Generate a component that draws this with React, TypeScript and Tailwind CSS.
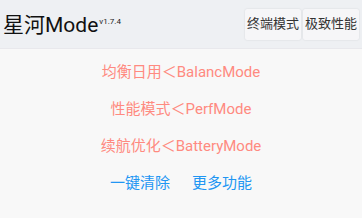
import React from 'react';

const modes = [
  { label: '均衡日用＜BalancMode' },
  { label: '性能模式＜PerfMode' },
  { label: '续航优化＜BatteryMode' },
];

const App: React.FC = () => {
  return (
    <div className="w-[362px] h-[218px] bg-[#f8f8f8] font-['Roboto','Noto_Sans_CJK_SC',sans-serif] overflow-hidden">
      <div className="h-[49px] bg-[#eef0f3] flex items-center justify-between pl-[3px] pr-[3px] border-b border-[#e8e8ec]">
        <div className="pt-[3px] leading-none whitespace-nowrap">
          <span className="text-[21px] text-[#111]">星河Mode</span>
          <span className="text-[8px] text-[#222] align-[8px] ml-[1px]">v1.7.4</span>
        </div>
        <div className="flex gap-[2px]">
          <button className="h-[31px] px-[2px] bg-[#f6f6f8] shadow-[0_0_2px_rgba(0,0,0,0.12)] rounded-[2px] text-[13px] text-[#333]">终端模式</button>
          <button className="h-[31px] px-[2px] bg-[#f6f6f8] shadow-[0_0_2px_rgba(0,0,0,0.12)] rounded-[2px] text-[13px] text-[#333]">极致性能</button>
        </div>
      </div>
      <div className="flex flex-col items-center pt-[5px]">
        {modes.map((m) => (
          <div key={m.label} className="h-[37px] flex items-center text-[15px] text-[#ff8a80]">
            {m.label}
          </div>
        ))}
        <div className="h-[37px] flex items-center gap-[22px] text-[15px] text-[#2196f3]">
          <span>一键清除</span>
          <span>更多功能</span>
        </div>
      </div>
    </div>
  );
};

export default App;
